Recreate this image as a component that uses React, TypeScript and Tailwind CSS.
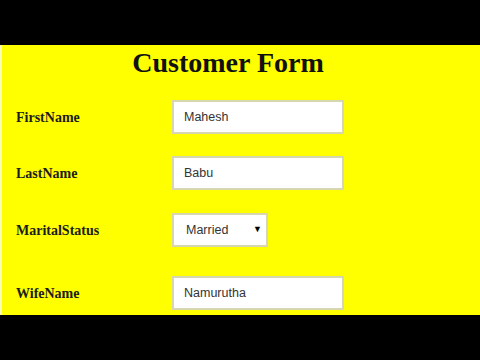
import React from "react";

const serif = { fontFamily: '"Liberation Serif", "Times New Roman", serif' };
const sans = { fontFamily: '"Liberation Sans", Arial, sans-serif' };

function Row({ label, top, children }: { label: string; top: string; children: React.ReactNode }) {
  return (
    <div className={`grid grid-cols-[156px_auto] items-center h-[34px] ${top}`}>
      <div className="text-[14px] font-bold text-[#1c1c1c]" style={serif}>
        {label}
      </div>
      <div className="flex">{children}</div>
    </div>
  );
}

function TextBox({ value }: { value: string }) {
  return (
    <input
      readOnly
      value={value}
      className="w-[172px] h-[34px] bg-white border-2 border-[#d6d6b0] px-[10px] text-[12.5px] text-[#333] outline-none"
      style={sans}
    />
  );
}

export default function App() {
  return (
    <div className="w-[480px] h-[360px] bg-black flex flex-col">
      <div className="h-[45px] shrink-0" />
      <div className="h-[270px] shrink-0 bg-[#ffff00] border-l-2 border-[#fbfbb8] overflow-hidden">
        <h1
          className="mt-[1.5px] text-[28px] leading-[32px] font-bold text-[#111] text-center pr-[26px]"
          style={serif}
        >
          Customer Form
        </h1>
        <div className="pl-[14px]">
          <Row label="FirstName" top="mt-[21.5px]">
            <TextBox value="Mahesh" />
          </Row>
          <Row label="LastName" top="mt-[22px]">
            <TextBox value="Babu" />
          </Row>
          <Row label="MaritalStatus" top="mt-[23px]">
            <div className="relative">
              <select
                defaultValue="Married"
                className="appearance-none w-[96px] h-[34px] bg-white border-2 border-[#d6d6b0] pl-[12px] text-[12.5px] text-[#333] outline-none"
                style={sans}
              >
                <option>Married</option>
                <option>Single</option>
              </select>
              <span className="absolute right-[6px] top-[10px] text-[9px] text-black pointer-events-none" style={sans}>
                ▼
              </span>
            </div>
          </Row>
          <Row label="WifeName" top="mt-[29px]">
            <TextBox value="Namurutha" />
          </Row>
        </div>
      </div>
      <div className="flex-1" />
    </div>
  );
}
